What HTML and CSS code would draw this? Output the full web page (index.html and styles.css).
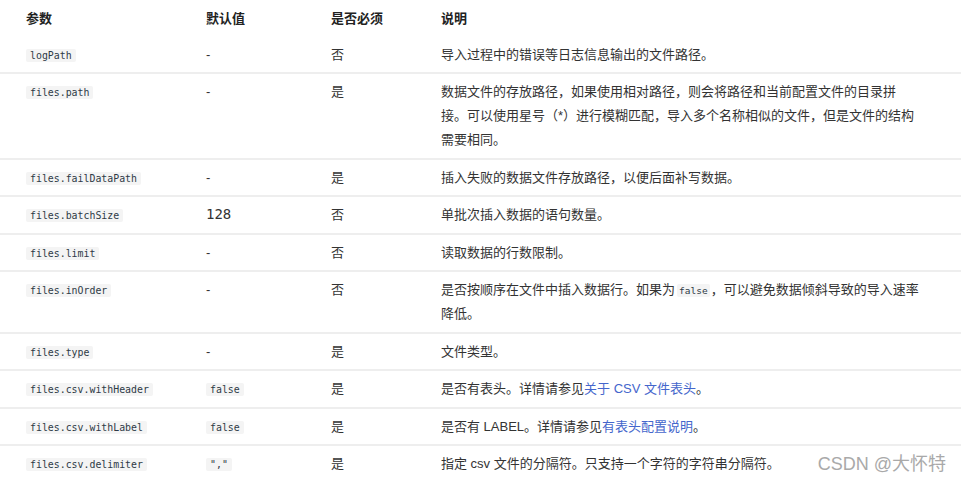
FILE: index.html
```html
<!DOCTYPE html>
<html lang="zh-CN">
<head>
<meta charset="utf-8">
<title>参数说明</title>
<link rel="stylesheet" href="styles.css">
</head>
<body>
<div class="page">
<table class="params">
  <colgroup>
    <col class="c1"><col class="c2"><col class="c3"><col class="c4">
  </colgroup>
  <thead>
    <tr><th>参数</th><th>默认值</th><th>是否必须</th><th>说明</th></tr>
  </thead>
  <tbody>
    <tr><td><code>logPath</code></td><td>-</td><td>否</td><td>导入过程中的错误等日志信息输出的文件路径。</td></tr>
    <tr><td><code>files.path</code></td><td>-</td><td>是</td><td>数据文件的存放路径，如果使用相对路径，则会将路径和当前配置文件的目录拼接。可以使用星号（*）进行模糊匹配，导入多个名称相似的文件，但是文件的结构需要相同。</td></tr>
    <tr><td><code>files.failDataPath</code></td><td>-</td><td>是</td><td>插入失败的数据文件存放路径，以便后面补写数据。</td></tr>
    <tr><td><code>files.batchSize</code></td><td><span class="num">128</span></td><td>否</td><td>单批次插入数据的语句数量。</td></tr>
    <tr><td><code>files.limit</code></td><td>-</td><td>否</td><td>读取数据的行数限制。</td></tr>
    <tr><td><code>files.inOrder</code></td><td>-</td><td>否</td><td>是否按顺序在文件中插入数据行。如果为<code class="inline">false</code>，可以避免数据倾斜导致的导入速率降低。</td></tr>
    <tr><td><code>files.type</code></td><td>-</td><td>是</td><td>文件类型。</td></tr>
    <tr><td><code>files.csv.withHeader</code></td><td><code>false</code></td><td>是</td><td>是否有表头。详情请参见<a class="link" href="#">关于 CSV 文件表头</a>。</td></tr>
    <tr><td><code>files.csv.withLabel</code></td><td><code>false</code></td><td>是</td><td>是否有 LABEL。详情请参见<a class="link" href="#">有表头配置说明</a>。</td></tr>
    <tr><td><code>files.csv.delimiter</code></td><td><code>","</code></td><td>是</td><td>指定 csv 文件的分隔符。只支持一个字符的字符串分隔符。</td></tr>
  </tbody>
</table>
<div class="watermark">CSDN @大怀特</div>
</div>
</body>
</html>
```

FILE: styles.css
```css
html, body {
  margin: 0;
  padding: 0;
  background: #ffffff;
}

body {
  font-family: "Liberation Sans", "Noto Sans CJK SC", sans-serif;
  font-size: 13px;
  color: #333333;
  overflow: hidden;
}

.page {
  position: relative;
  width: 961px;
  height: 482px;
  padding-top: 1px;
  box-sizing: border-box;
}

.params {
  width: 961px;
  border-collapse: collapse;
  table-layout: fixed;
}

.c1 { width: 178px; }
.c2 { width: 125px; }
.c3 { width: 110px; }
.c4 { width: 548px; }

.params th,
.params td {
  text-align: left;
  vertical-align: top;
  line-height: 24px;
  height: 24px;
  padding: 6px 0 5.5px 28px;
}

.params th:first-child,
.params td:first-child {
  padding-left: 26px;
}

.params th:last-child,
.params td:last-child {
  padding-right: 41px;
}

.params th {
  font-weight: bold;
  color: #222222;
}

.params tbody tr {
  border-bottom: 2px solid #eeeeee;
}

code {
  font-family: "DejaVu Sans Mono", monospace;
  font-size: 9.9px;
  line-height: 12px;
  color: #2e3a46;
  background: #f4f4f4;
  padding: 1px 4px;
  border-radius: 2px;
}

code.inline {
  padding: 1px 2px;
  margin: 0 1px 0 2px;
  font-size: 9.5px;
}

.num {
  font-family: "DejaVu Sans Mono", monospace;
  font-size: 14px;
  line-height: 16px;
  color: #333333;
}

.link {
  color: #4466cc;
  text-decoration: none;
}

.watermark {
  position: absolute;
  right: 15px;
  bottom: 7px;
  font-family: "Liberation Sans", "Noto Sans CJK SC", sans-serif;
  font-size: 18px;
  line-height: 22px;
  color: #a9a9a9;
  text-shadow: 0 0 1px #ffffff;
}
```
